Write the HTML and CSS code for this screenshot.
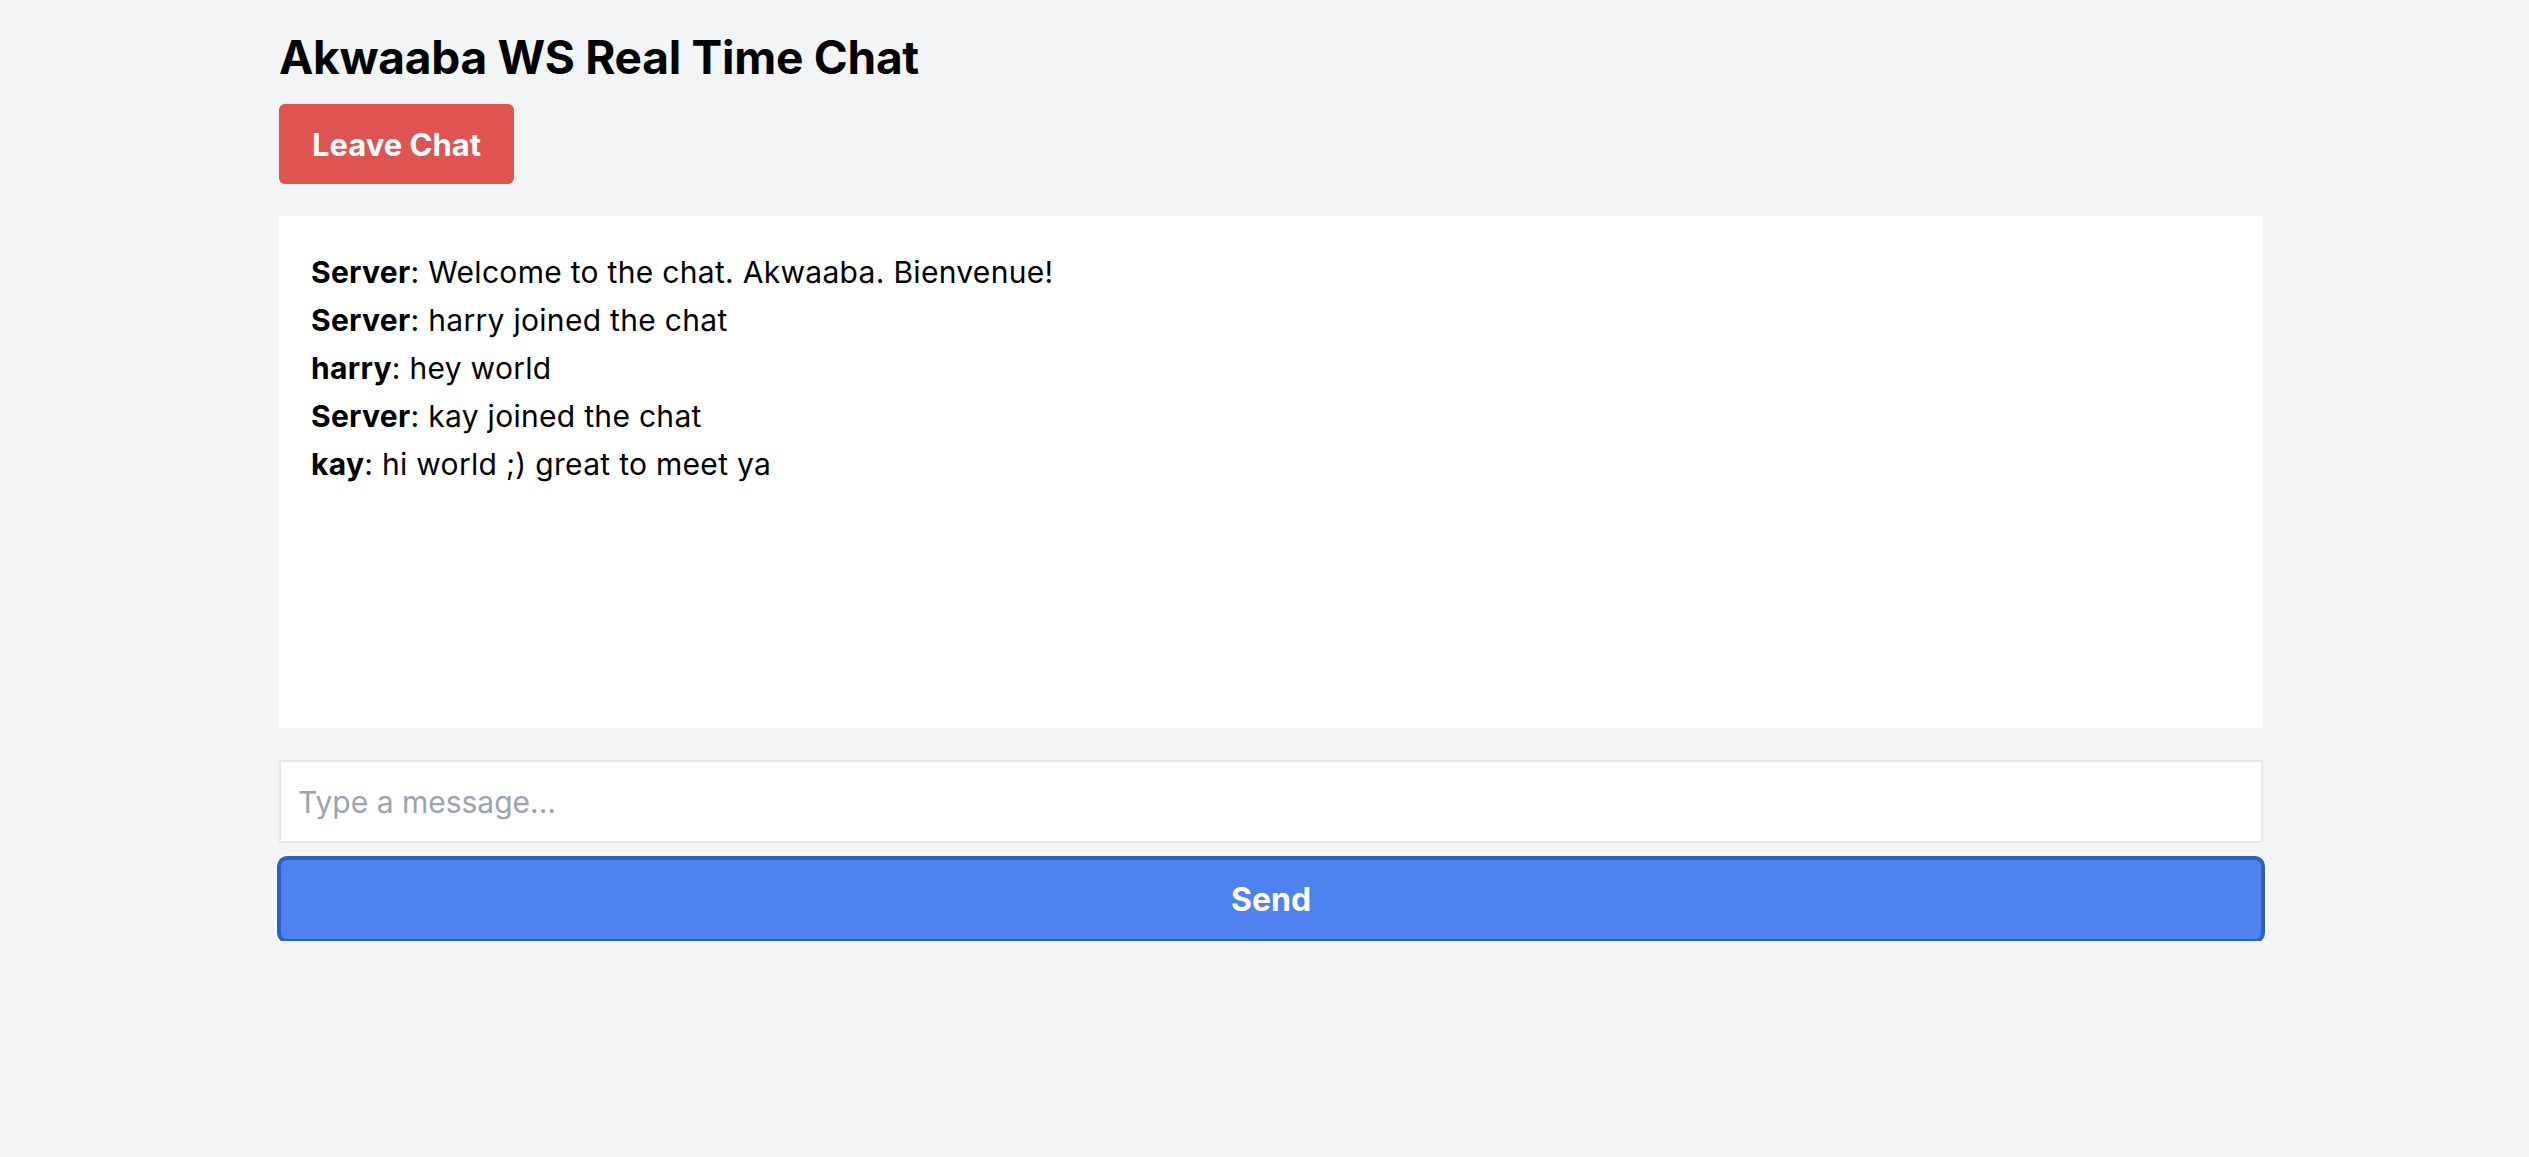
FILE: index.html
```html
<!DOCTYPE html>
<html lang="en">
<head>
<meta charset="utf-8">
<title>Akwaaba WS Real Time Chat</title>
<link rel="stylesheet" href="styles.css">
</head>
<body>
<main class="app">
  <h1 class="title">Akwaaba WS Real Time Chat</h1>
  <div class="actions">
    <button class="btn-leave" type="button">Leave Chat</button>
  </div>
  <section class="messages">
    <div class="msg"><strong>Server</strong>: Welcome to the chat. Akwaaba. Bienvenue!</div>
    <div class="msg"><strong>Server</strong>: harry joined the chat</div>
    <div class="msg"><strong>harry</strong>: hey world</div>
    <div class="msg"><strong>Server</strong>: kay joined the chat</div>
    <div class="msg"><strong>kay</strong>: hi world ;) great to meet ya</div>
  </section>
  <form class="composer">
    <input class="input" type="text" placeholder="Type a message...">
    <button class="btn-send" type="button">Send</button>
  </form>
</main>
</body>
</html>
```
FILE: styles.css
```css
* { box-sizing: border-box; }
html, body { margin: 0; padding: 0; }
body {
  background: #f3f4f6;
  font-family: Inter, "Liberation Sans", sans-serif;
  color: #000;
}
.app {
  width: 1984px;
  margin-left: 279px;
  padding-top: 29px;
  display: flex;
  flex-direction: column;
}
.title {
  margin: 0;
  font-size: 46px;
  line-height: 56px;
  font-weight: 700;
  letter-spacing: -0.25px;
}
.actions {
  margin-top: 19px;
  display: flex;
}
.btn-leave {
  height: 80px;
  padding: 0 33px;
  border: none;
  border-radius: 6px;
  background: #df5350;
  color: #fff;
  font-family: inherit;
  font-size: 31px;
  font-weight: 700;
}
.messages {
  margin-top: 32px;
  height: 512px;
  padding: 32px;
  background: #fff;
  font-size: 30px;
  line-height: 48px;
  letter-spacing: 0.3px;
}
.msg strong { font-weight: 700; }
.composer {
  margin-top: 32px;
  display: flex;
  flex-direction: column;
  gap: 15px;
}
.input {
  height: 83px;
  border: 2px solid #e5e7eb;
  background: #fff;
  padding: 0 17px;
  font-family: inherit;
  font-size: 30px;
  outline: none;
}
.input::placeholder { color: #9ca3af; }
.btn-send {
  height: 83px;
  border: none;
  border-radius: 8px;
  background: #4f82ec;
  color: #fff;
  font-family: inherit;
  font-size: 32px;
  font-weight: 700;
  box-shadow: inset 0 0 0 2px #2b5fc8, 0 0 0 2px #2b5fc8, 0 0 0 3.5px #fff;
}
```
